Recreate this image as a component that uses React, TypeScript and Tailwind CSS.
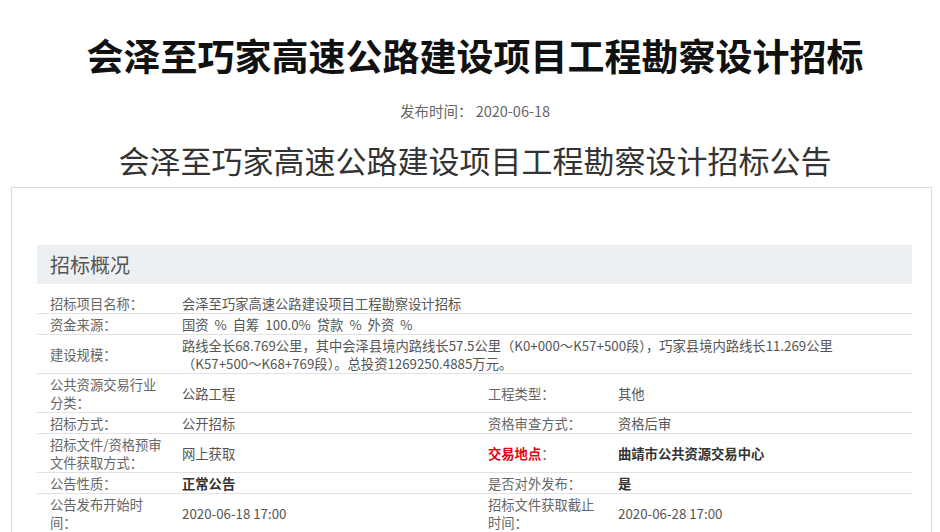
const FONT = { fontFamily: '"Noto Sans CJK SC", "Noto Sans", sans-serif' };

type Cell = { text: React.ReactNode; strong?: boolean };
type Row = { label: React.ReactNode; value: Cell; label2?: React.ReactNode; value2?: Cell };

const rows: Row[] = [
  { label: "招标项目名称：", value: { text: "会泽至巧家高速公路建设项目工程勘察设计招标" } },
  {
    label: "资金来源：",
    value: { text: <span className="[word-spacing:3px]">国资 % 自筹 100.0% 贷款 % 外资 %</span> },
  },
  {
    label: "建设规模：",
    value: {
      text: (
        <>
          路线全长68.769公里，其中会泽县境内路线长57.5公里（K0+000～K57+500段），巧家县境内路线长11.269公里
          <br />
          （K57+500～K68+769段）。总投资1269250.4885万元。
        </>
      ),
    },
  },
  {
    label: "公共资源交易行业分类：",
    value: { text: "公路工程" },
    label2: "工程类型：",
    value2: { text: "其他" },
  },
  {
    label: "招标方式：",
    value: { text: "公开招标" },
    label2: "资格审查方式：",
    value2: { text: "资格后审" },
  },
  {
    label: "招标文件/资格预审文件获取方式：",
    value: { text: "网上获取" },
    label2: (
      <>
        <span className="font-bold text-[#e60012]">交易地点</span>：
      </>
    ),
    value2: { text: "曲靖市公共资源交易中心", strong: true },
  },
  {
    label: "公告性质：",
    value: { text: "正常公告", strong: true },
    label2: "是否对外发布：",
    value2: { text: "是", strong: true },
  },
  {
    label: "公告发布开始时间：",
    value: { text: "2020-06-18 17:00" },
    label2: "招标文件获取截止时间：",
    value2: { text: "2020-06-28 17:00" },
  },
];

function Value({ cell, wide }: { cell: Cell; wide?: boolean }) {
  return (
    <div
      className={`flex items-center pl-[13px] ${wide ? "col-span-3" : ""} ${
        cell.strong ? "font-bold text-[#333]" : "text-[#555]"
      }`}
    >
      <div>{cell.text}</div>
    </div>
  );
}

function Label({ children }: { children: React.ReactNode }) {
  return (
    <div className="flex items-center pl-[13px] text-[#666]">
      <div className="w-[112px]">{children}</div>
    </div>
  );
}

export default function App() {
  return (
    <div className="w-[940px] h-[532px] overflow-hidden bg-white" style={FONT}>
      <div className="pl-[10px]">
        <h1 className="pt-[33px] text-center text-[37px] leading-[44px] font-bold text-[#111]">
          会泽至巧家高速公路建设项目工程勘察设计招标
        </h1>
        <div className="mt-[24px] text-center text-[14.5px] leading-[20px] text-[#666]">
          发布时间： 2020-06-18
        </div>
        <h2 className="mt-[19px] text-center text-[31px] leading-[40px] text-[#333]">
          会泽至巧家高速公路建设项目工程勘察设计招标公告
        </h2>
      </div>
      <div className="mt-[7px] ml-[11px] w-[921px] border border-[#dcdcdc] pt-[57px] pl-[25px] pr-[19px]">
        <div className="h-[39px] flex items-center pl-[13px] bg-[#edf0f2] text-[20px] text-[#555]">
          招标概况
        </div>
        <div className="mt-[9px] text-[13.3px] leading-[18px]">
          {rows.map((r, i) => (
            <div
              key={i}
              className="grid grid-cols-[132px_306px_130px_1fr] border-b border-[#e2e2e2] pt-[2px]"
            >
              <Label>{r.label}</Label>
              <Value cell={r.value} wide={!r.label2} />
              {r.label2 && <Label>{r.label2}</Label>}
              {r.value2 && <Value cell={r.value2} />}
            </div>
          ))}
        </div>
      </div>
    </div>
  );
}
